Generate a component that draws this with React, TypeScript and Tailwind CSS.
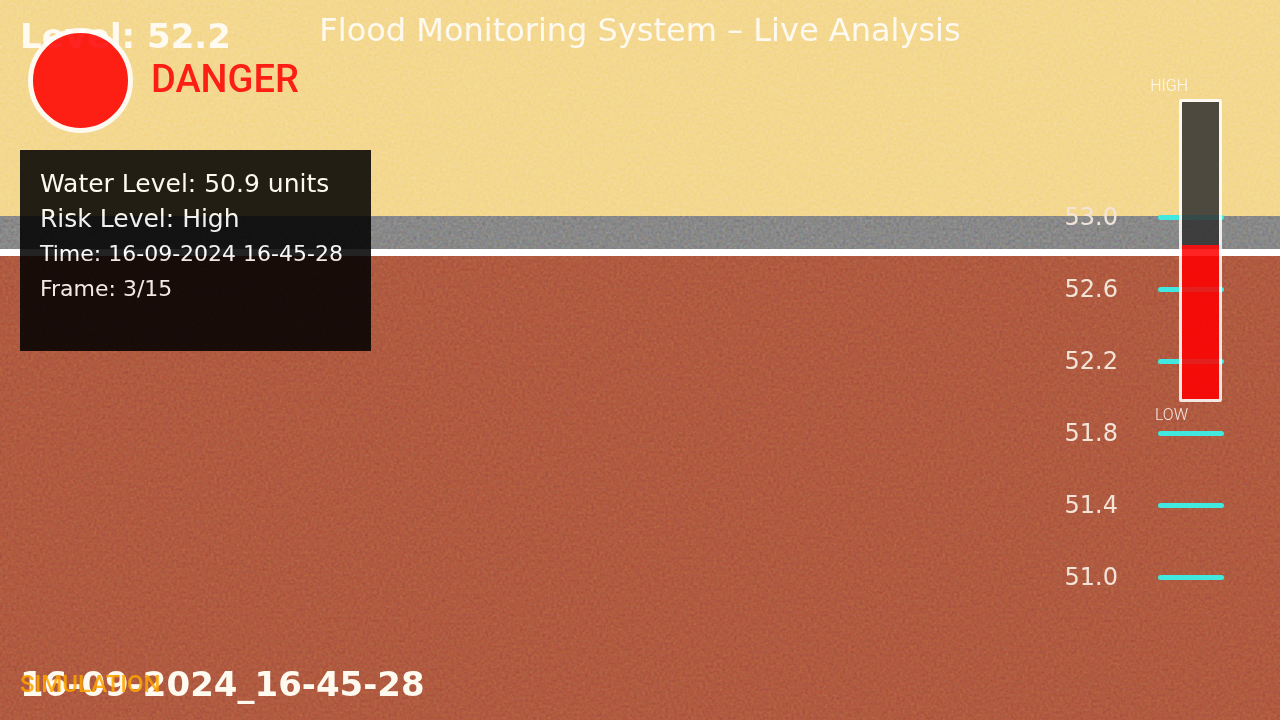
const SCALE_MARKS = ["53.0", "52.6", "52.2", "51.8", "51.4", "51.0"];

function CameraFeed() {
  return (
    <div className="relative col-start-1 row-start-1 grid overflow-hidden">
      <div className="col-start-1 row-start-1 flex flex-col">
        <div className="h-[216px] bg-[#f4d88f]" />
        <div className="h-[33px] bg-[#888888]" />
        <div className="h-[7px] bg-white" />
        <div className="flex-1 bg-[#b05a40]" />
      </div>

      <svg
        className="absolute inset-0 h-full w-full opacity-25 mix-blend-overlay"
        aria-hidden="true"
      >
        <filter
          id="grain"
          x="0"
          y="0"
          width="100%"
          height="100%"
          colorInterpolationFilters="sRGB"
        >
          <feTurbulence type="fractalNoise" baseFrequency="0.35" numOctaves="2" seed="4" />
          <feColorMatrix
            type="matrix"
            values="0.8 0.2 0 0 0  0.3 0.7 0 0 0  0 0.3 0.7 0 0  0 0 0 0 1"
          />
        </filter>
        <rect width="100%" height="100%" filter="url(#grain)" />
      </svg>

      <div className="relative col-start-1 row-start-1 flex flex-col justify-between pt-4 pb-4 pl-5 font-['DejaVu_Sans',sans-serif] text-[34px] leading-10 font-bold text-[#fffaf0]">
        <p>Level: 52.2</p>
        <p>16-09-2024_16-45-28</p>
      </div>

      <ul className="relative col-start-1 row-start-1 justify-self-end pt-[181px] pr-14">
        {SCALE_MARKS.map((mark) => (
          <li key={mark} className="flex h-[72px] items-center gap-10">
            <span className="font-['DejaVu_Sans',sans-serif] text-[24px] leading-6 text-[#f3e4d8]">
              {mark}
            </span>
            <span className="h-[5px] w-[66px] rounded-full bg-[#41e8df]" />
          </li>
        ))}
      </ul>
    </div>
  );
}

function StatusPanel() {
  return (
    <section className="w-[351px] bg-black px-5 pt-4 pb-[45px] font-['DejaVu_Sans',sans-serif] whitespace-nowrap text-white">
      <p className="text-[25px] leading-[35px]">Water Level: 50.9 units</p>
      <p className="text-[25px] leading-[35px]">Risk Level: High</p>
      <p className="text-[22px] leading-[35px]">Time: 16-09-2024 16-45-28</p>
      <p className="text-[22px] leading-[35px]">Frame: 3/15</p>
    </section>
  );
}

function LevelGauge({ percent }: { percent: number }) {
  return (
    <div className="col-start-1 row-start-1 flex flex-col items-end self-start justify-self-end pt-[76px] pr-[58px] font-[Roboto,sans-serif] text-[16px] leading-5 font-light text-white">
      <span className="mr-[34px]">HIGH</span>
      <div
        className="my-[3px] flex h-[303px] w-[43px] flex-col justify-end rounded-[2px] border-[3px] border-white bg-[#323232]"
        role="meter"
        aria-label="Water level"
        aria-valuemin={0}
        aria-valuemax={100}
        aria-valuenow={percent}
      >
        <div className="bg-[#ff0000]" style={{ height: `${percent}%` }} />
      </div>
      <span className="mr-[34px]">LOW</span>
    </div>
  );
}

export default function App() {
  return (
    <main className="grid min-h-screen">
      <CameraFeed />

      <div className="relative col-start-1 row-start-1 grid opacity-[0.86]">
        <div className="col-start-1 row-start-1 flex flex-col justify-between pb-5 pl-5">
          <div className="flex flex-col gap-[17px] pt-7">
            <div className="flex items-center gap-[18px] pl-2">
              <span className="size-[105px] rounded-full border-[5px] border-white bg-[#ff0000]" />
              <strong className="pb-1 font-[Roboto,sans-serif] text-[38px] leading-10 font-medium text-[#ff0000]">
                DANGER
              </strong>
            </div>
            <StatusPanel />
          </div>
          <p className="font-[Roboto,sans-serif] text-[24px] leading-8 font-medium text-[#ffa500]">
            SIMULATION
          </p>
        </div>

        <h1 className="col-start-1 row-start-1 self-start justify-self-center pt-2 font-['DejaVu_Sans',sans-serif] text-[32px] leading-[44px] font-normal text-white">
          Flood Monitoring System – Live Analysis
        </h1>

        <LevelGauge percent={52} />
      </div>
    </main>
  );
}
